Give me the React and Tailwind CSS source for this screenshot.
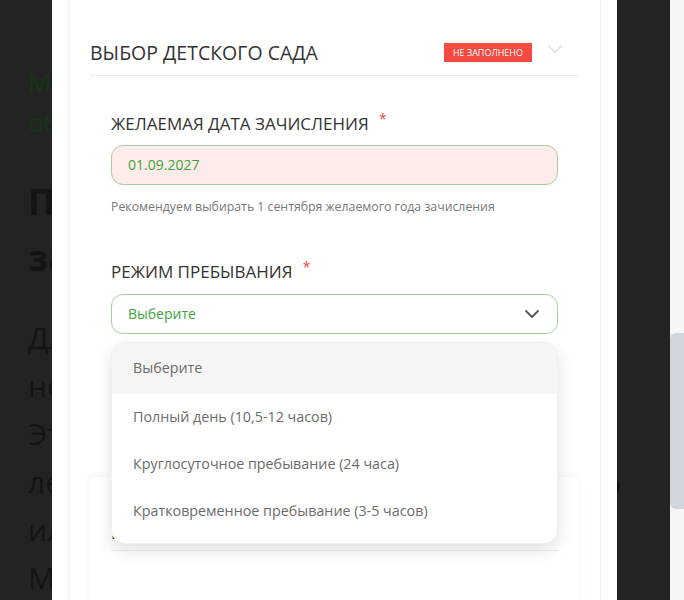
import React from 'react';

const font = { fontFamily: '"Open Sans", "Noto Sans", sans-serif' };

const options = [
    'Выберите',
    'Полный день (10,5-12 часов)',
    'Круглосуточное пребывание (24 часа)',
    'Кратковременное пребывание (3-5 часов)',
];

function Chevron({ className, strokeWidth = 2 }) {
    return (
        <svg viewBox="0 0 24 24" fill="none" stroke="currentColor" strokeWidth={strokeWidth} strokeLinecap="round" strokeLinejoin="round" className={className}>
            <path d="M4 8l8 8 8-8" />
        </svg>
    );
}

export default function App() {
    return (
        <div className="flex h-[600px] w-[684px] overflow-hidden bg-[#232323]" style={font}>
            {/* page behind the overlay */}
            <div className="w-[52px] shrink-0 overflow-hidden whitespace-nowrap pl-[28px] text-[#141414]">
                <div className="mt-[62px] text-[26px] leading-[40px] text-[#163516]">Муниципальная</div>
                <div className="text-[26px] leading-[40px] text-[#163516]">образовательная</div>
                <div className="mt-[32px] text-[36px] font-bold leading-[56px]">Подача</div>
                <div className="text-[36px] font-bold leading-[56px]">заявления</div>
                <div className="mt-[28px] text-[30px] leading-[48px]">Для</div>
                <div className="text-[30px] leading-[48px]">нового</div>
                <div className="text-[30px] leading-[48px]">Это</div>
                <div className="text-[30px] leading-[48px]">летом</div>
                <div className="text-[30px] leading-[48px]">или</div>
                <div className="text-[30px] leading-[48px]">Мы</div>
            </div>

            {/* modal */}
            <div className="w-[565px] shrink-0 bg-white px-[16px]">
                <div className="h-full border-x border-[#f3f3f3] px-[21px] pt-[38px]">
                    <div className="flex items-center border-b border-[#ececec] pb-[8px]">
                        <div className="flex-1 text-[19.5px] text-[#333]">ВЫБОР ДЕТСКОГО САДА</div>
                        <span className="bg-[#f44a3f] px-[9px] py-[4px] text-[9px] leading-[11px] text-white">НЕ ЗАПОЛНЕНО</span>
                        <Chevron className="ml-[13px] mr-[14px] h-[20px] w-[20px] -translate-y-[4px] text-[#c4c4c4]" strokeWidth={1.2} />
                    </div>

                    <div className="px-[21px]">
                        <div className="mt-[35px] text-[17px] text-[#333]">
                            ЖЕЛАЕМАЯ ДАТА ЗАЧИСЛЕНИЯ <span className="relative -top-[6px] ml-[6px] text-[14px] text-[#ef4b3f]">*</span>
                        </div>
                        <div className="mt-[8px] flex h-[40px] items-center rounded-[12px] border border-[#a6cf98] bg-[#fdecea] px-[16px] text-[14px] text-[#3ba53b]">
                            01.09.2027
                        </div>
                        <div className="mt-[13px] text-[12.3px] text-[#777]">Рекомендуем выбирать 1 сентября желаемого года зачисления</div>

                        <div className="mt-[43px] text-[17px] text-[#333]">
                            РЕЖИМ ПРЕБЫВАНИЯ <span className="relative -top-[6px] ml-[6px] text-[14px] text-[#ef4b3f]">*</span>
                        </div>
                        <div className="relative mt-[9px]">
                            <div className="flex h-[40px] items-center rounded-[12px] border border-[#a6cf98] bg-white px-[16px] text-[14px] text-[#3ba53b]">
                                <span className="flex-1">Выберите</span>
                                <Chevron className="h-[18px] w-[18px] text-[#555]" strokeWidth={2.4} />
                            </div>
                            <div className="absolute left-0 right-0 top-full z-10 mt-[8px] overflow-hidden rounded-[14px] border border-[#f0f0f0] bg-white pb-[8px] shadow-[0_6px_16px_rgba(0,0,0,0.12)]">
                                {options.map((o, i) => (
                                    <div key={o} className={`flex items-center px-[21px] text-[14.3px] text-[#6b6b6b] ${i === 0 ? 'h-[51px] bg-[#f5f5f5]' : 'h-[47px]'}`}>
                                        {o}
                                    </div>
                                ))}
                            </div>
                        </div>
                    </div>

                    <div className="mt-[143px] h-[200px] rounded-t-[4px] bg-white px-[21px] shadow-[0_0_10px_rgba(0,0,0,0.06)]">
                        <div className="h-[74px] border-b border-[#ececec] pt-[44px] text-[16px] text-[#333]">ШКОЛА</div>
                    </div>
                </div>
            </div>

            {/* right part behind overlay */}
            <div className="w-[53px] shrink-0 overflow-hidden pt-[463px] text-[30px] leading-[40px] text-[#111]">
                <span className="-ml-[14px]">о</span>
            </div>

            {/* scrollbar */}
            <div className="flex-1 bg-[#f5f6fa] pt-[333px]">
                <div className="h-[176px] rounded-l-[6px] bg-[#d1d5dc]" />
            </div>
        </div>
    );
}
